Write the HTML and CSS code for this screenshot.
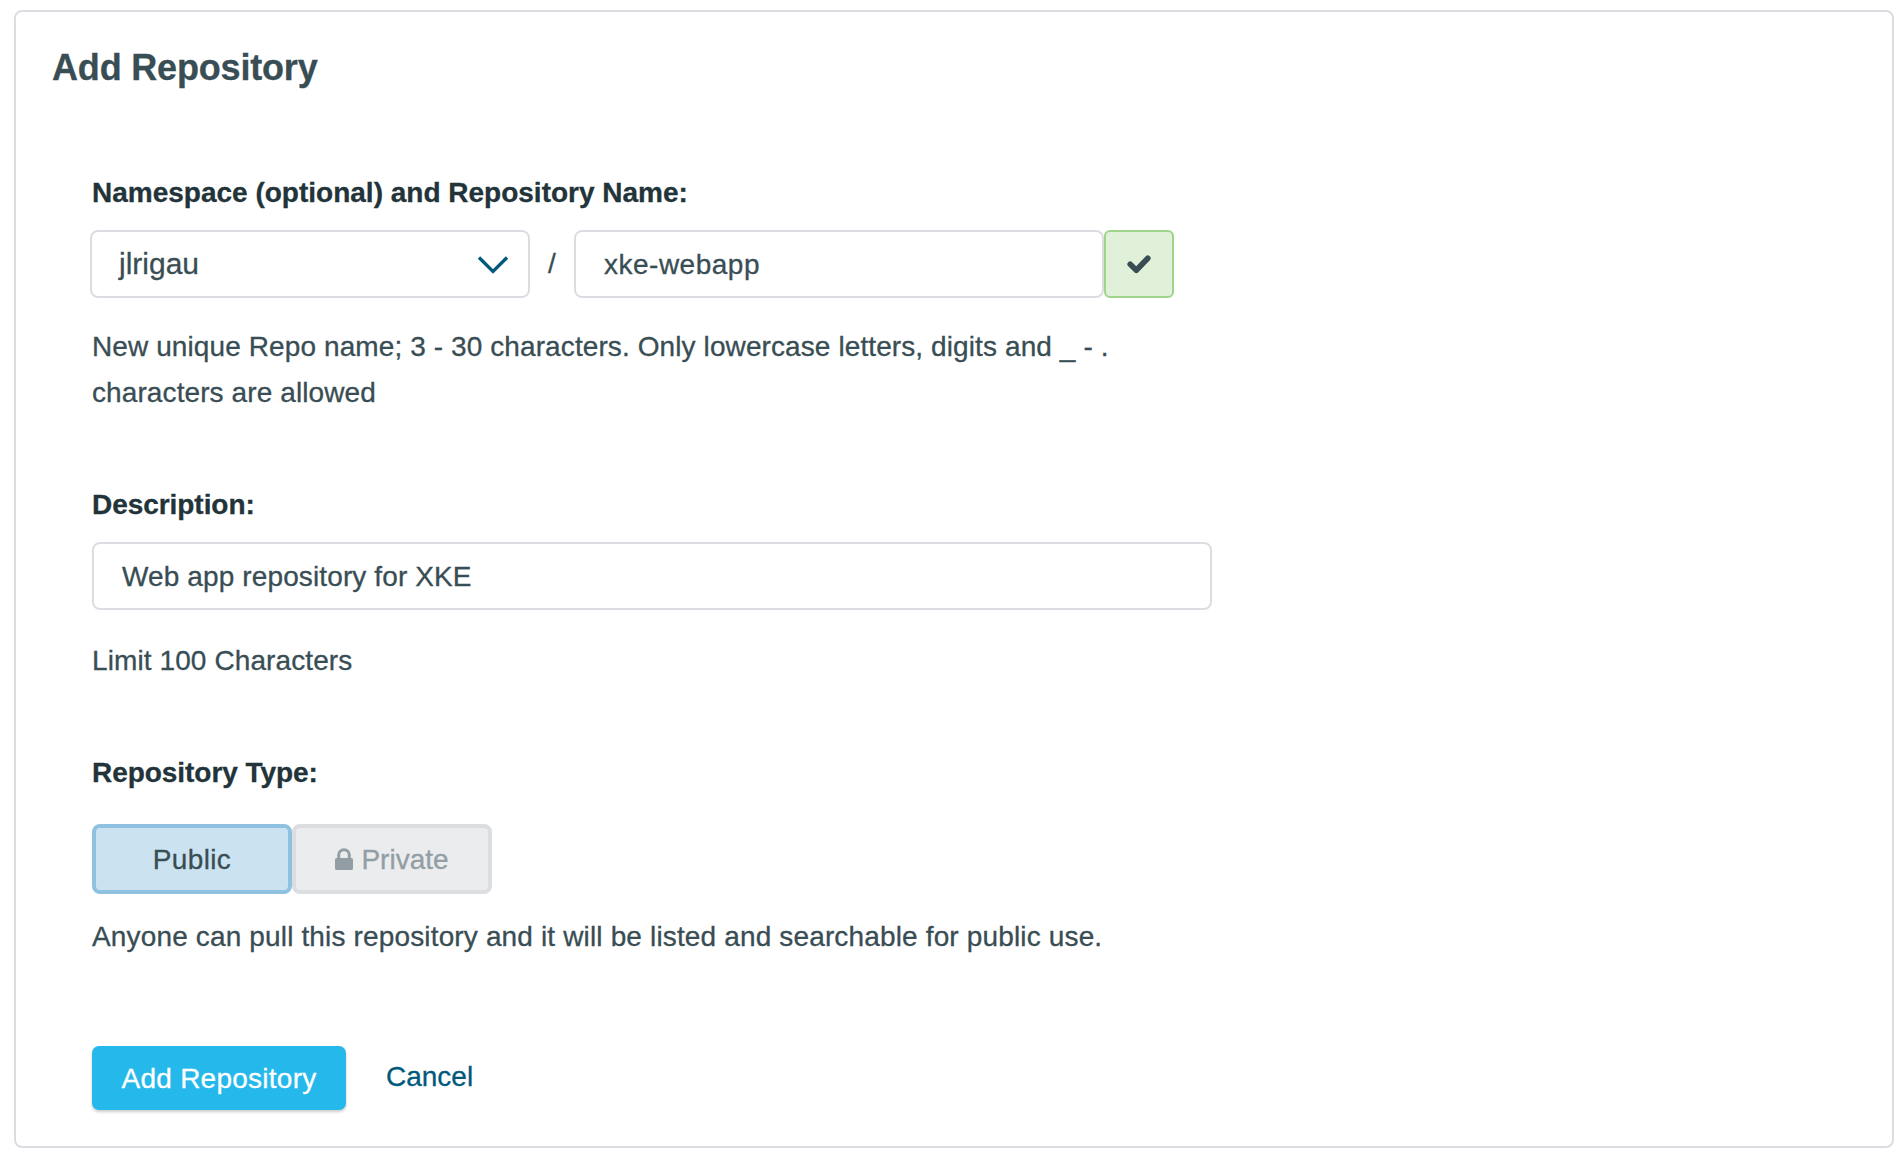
FILE: index.html
```html
<!DOCTYPE html>
<html lang="en">
<head>
<meta charset="utf-8">
<title>Add Repository</title>
<link rel="stylesheet" href="styles.css">
</head>
<body>
<main class="card">
  <h1 class="title">Add Repository</h1>
  <form class="form">
    <section class="group">
      <div class="label">Namespace (optional) and Repository Name:</div>
      <div class="name-row">
        <div class="field select"><span>jlrigau</span>
          <svg class="chevron" width="32" height="18" viewBox="0 0 32 18"><path d="M2 1.500 16 15.500 30 1.500" fill="none" stroke="#00597b" stroke-width="3.300"/></svg>
        </div>
        <span class="slash">/</span>
        <div class="field name">xke-webapp</div>
        <div class="valid">
          <svg width="24" height="19" viewBox="0 0 24 19"><path d="M3.200 9.300 9.300 15.200 20.800 3.300" fill="none" stroke="#394d54" stroke-width="5.600" stroke-linecap="round" stroke-linejoin="round"/></svg>
        </div>
      </div>
      <p class="help help-name">New unique Repo name; 3 - 30 characters. Only lowercase letters, digits and _ - .<br>characters are allowed</p>
    </section>
    <section class="group">
      <div class="label label-short">Description:</div>
      <div class="field description">Web app repository for XKE</div>
      <p class="help help-limit">Limit 100 Characters</p>
    </section>
    <section class="group">
      <div class="label label-short">Repository Type:</div>
      <div class="types">
        <button type="button" class="type type-on">Public</button>
        <button type="button" class="type type-off">
          <svg width="18" height="22" viewBox="0 0 18 22"><path d="M3.700 11V7a5.300 5.300 0 0 1 10.600 0V11" fill="none" stroke="#929ea3" stroke-width="3"/><rect y="10" width="18" height="12" rx="1.500" fill="#929ea3"/></svg>
          <span>Private</span>
        </button>
      </div>
      <p class="help help-type">Anyone can pull this repository and it will be listed and searchable for public use.</p>
    </section>
    <div class="actions">
      <button type="button" class="submit">Add Repository</button>
      <a class="cancel">Cancel</a>
    </div>
  </form>
</main>
</body>
</html>
```
FILE: styles.css
```css
* { box-sizing: border-box; }
body {
  margin: 0;
  padding: 10px 8px 8px 14px;
  background: #fff;
  color: #394d54;
  font: 28px/46px "Liberation Sans", Arial, sans-serif;
  -webkit-text-stroke: .3px;
}
.card {
  height: 1138px;
  padding: 33px 36px 35px;
  border: 2px solid #dcdde2;
  border-radius: 8px;
}
.title { margin: 0; font-size: 36px; line-height: 46px; letter-spacing: -.18px; }
.form { padding: 79px 0 0 40px; }
.group { margin-bottom: 66px; }
.label { margin-bottom: 14px; color: #22343a; font-weight: bold; }
.label-short { letter-spacing: -.05px; }
.name-row { display: flex; margin-left: -2px; }
.field {
  display: flex;
  align-items: center;
  height: 68px;
  padding: 2px 28px 0;
  border: 2px solid #dcdde2;
  border-radius: 8px;
}
.select {
  width: 440px;
  justify-content: space-between;
  padding: 0 19px 0 27px;
  font-size: 30px;
}
.chevron { margin-top: 2px; }
.slash { width: 44px; text-align: center; line-height: 68px; }
.name { width: 530px; letter-spacing: .5px; }
.valid {
  display: flex;
  align-items: center;
  justify-content: center;
  width: 70px;
  height: 68px;
  padding-top: 1px;
  border: 2px solid #9fd48c;
  border-radius: 6px;
  background: #e1f0d9;
}
.help { margin: 0; letter-spacing: .1px; }
.help-name { padding-top: 26px; }
.description { width: 1120px; letter-spacing: .12px; }
.help-limit { padding-top: 28px; }
.types { display: flex; padding-top: 14px; }
.type {
  display: flex;
  align-items: center;
  justify-content: center;
  gap: 8px;
  width: 200px;
  height: 70px;
  padding: 2px 0 0;
  border: 4px solid;
  border-radius: 8px;
  font: inherit;
}
.type-on { border-color: #8fc1e0; background: #cbe2f0; color: #394d54; letter-spacing: .35px; }
.type-off { border-color: #dcdde0; background: #ebecee; color: #929ea3; }
.type-off svg { margin-top: -2px; }
.help-type { padding-top: 20px; letter-spacing: .15px; }
.actions { display: flex; padding-top: 20px; }
.submit {
  width: 254px;
  height: 64px;
  padding: 2px 0 0;
  border: 0;
  border-radius: 7px;
  background: #24b8eb;
  box-shadow: 0 2px 3px rgba(0, 0, 0, .2);
  color: #fff;
  font: inherit;
  letter-spacing: .25px;
}
.cancel { margin-left: 40px; color: #00597b; line-height: 62px; }
```
